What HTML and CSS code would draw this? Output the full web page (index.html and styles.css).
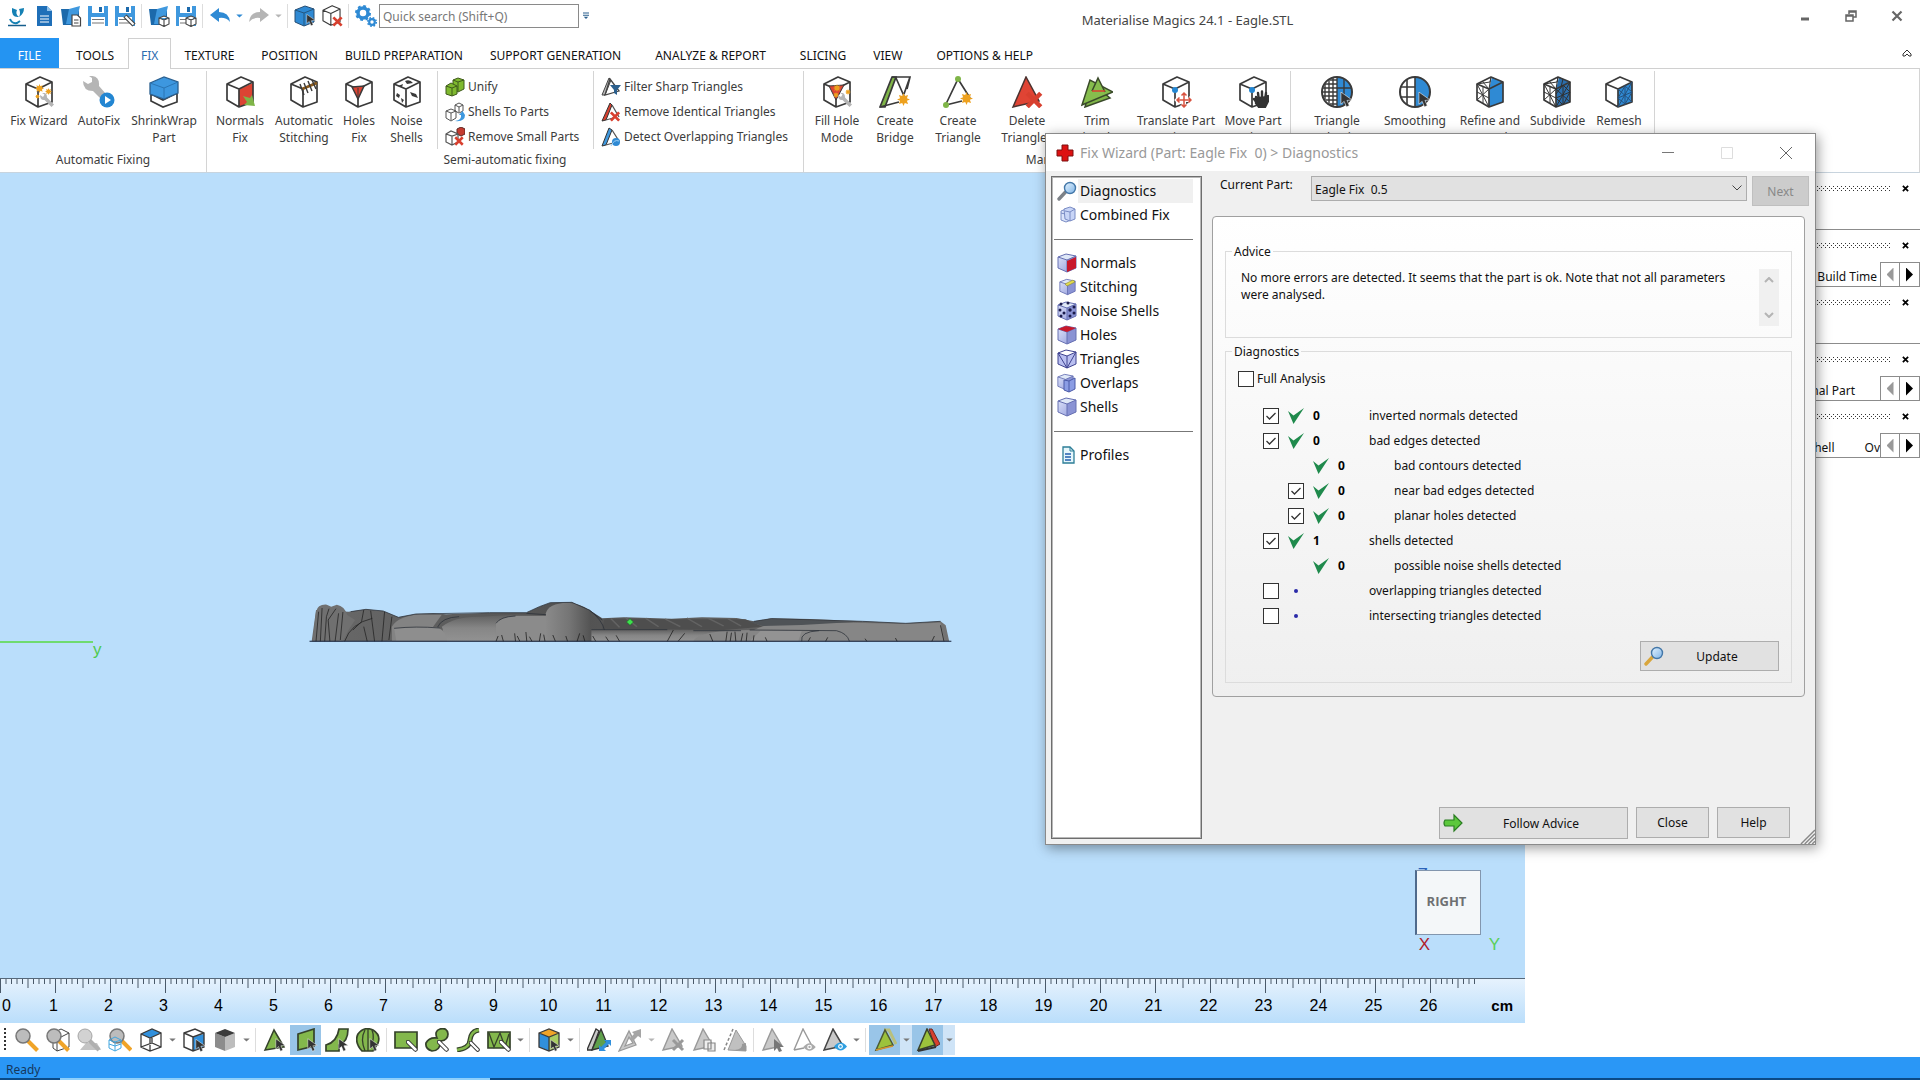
FILE: index.html
```html
<!DOCTYPE html>
<html lang="en">
<head>
  <meta charset="UTF-8">
  <title>Materialise Magics 24.1 - Eagle.STL</title>
  <link rel="stylesheet" href="styles.css">
</head>
<body>
  <!-- Icon sprite -->
  <svg class="sprite" xmlns="http://www.w3.org/2000/svg" aria-hidden="true">
    <defs>
      <linearGradient id="lensFill" x1="0" y1="0" x2="1" y2="1">
        <stop offset="0" stop-color="#e4f3ff"/><stop offset="1" stop-color="#7fb4e6"/>
      </linearGradient>
      <linearGradient id="faceFill" x1="0" y1="0" x2="1" y2="1">
        <stop offset="0" stop-color="#dfe5fa"/><stop offset="1" stop-color="#8f98da"/>
      </linearGradient>
      <linearGradient id="stone" x1="0" y1="0" x2="0" y2="1">
        <stop offset="0" stop-color="#5e5e5e"/><stop offset=".5" stop-color="#868686"/><stop offset="1" stop-color="#929292"/>
      </linearGradient>
      <linearGradient id="stoneDark" x1="0" y1="0" x2="1" y2="0">
        <stop offset="0" stop-color="#6a6a6a"/><stop offset=".4" stop-color="#515151"/><stop offset="1" stop-color="#747474"/>
      </linearGradient>
      <linearGradient id="dome" x1="0" y1="0" x2="1" y2="0">
        <stop offset="0" stop-color="#8a8a8a"/><stop offset=".5" stop-color="#757575"/><stop offset="1" stop-color="#505050"/>
      </linearGradient>
    </defs>

    <!-- shared parts -->
    <symbol id="cube" viewBox="0 0 32 32">
      <path d="M3 8 17 1 29 6V26L15 31 3 24ZM3 8 15 13 29 6M15 13V31" fill="none" stroke="#3a3a3a" stroke-width="1.7" stroke-linejoin="round"/>
    </symbol>
    <symbol id="arrow" viewBox="0 0 14 16">
      <path d="M1 0 1 13 4.500 10 7 16 10 14.500 7.500 9 13 8.500Z" fill="#333" stroke="#fff" stroke-width=".6"/>
    </symbol>
    <symbol id="cross" viewBox="0 0 12 12">
      <path d="M1.500 1.500 10.500 10.500M10.500 1.500 1.500 10.500" stroke="#d8402f" stroke-width="3"/>
    </symbol>
    <symbol id="spark" viewBox="0 0 16 16">
      <path d="M8 0 9.600 3.800 13.600 2.400 12.200 6.400 16 8 12.200 9.600 13.600 13.600 9.600 12.200 8 16 6.400 12.200 2.400 13.600 3.800 9.600 0 8 3.800 6.400 2.400 2.400 6.400 3.800Z" fill="#eda11f"/>
    </symbol>
    <symbol id="wrench" viewBox="0 0 14 14">
      <path d="M0 2 3 4 4.500 1.500 2 0Q7-1 7 4.500L14 11.500 11.500 14 4.500 7Q0 7.500 0 2Z" fill="#b5b5b5"/>
    </symbol>
    <symbol id="caret" viewBox="0 0 8 5"><path d="M0 .500H8L4 4.500Z" fill="currentColor"/></symbol>
    <symbol id="eye" viewBox="0 0 14 9">
      <path d="M0 4.500Q7-4 14 4.500 7 13 0 4.500Z" fill="currentColor"/><circle cx="7" cy="4.500" r="2.600" fill="#fff"/><circle cx="7" cy="4.500" r="1.300" fill="currentColor"/>
    </symbol>
    <symbol id="lens" viewBox="0 0 24 24">
      <path d="M13 13 22.500 22.500" stroke="#f0a428" stroke-width="4"/><circle cx="8" cy="8" r="7" fill="#bcbcbc" stroke="#777" stroke-width="1.500"/>
    </symbol>

    <!-- quick access -->
    <symbol id="logo" viewBox="0 0 22 22">
      <path d="M6 3 11 5Q9 9 13 12 5 13 6 3ZM13 4 18 3Q18 9 13 12 15 8 13 4Z" fill="#1581b4"/><path d="M4 14Q6 19 11 18L14 16" fill="none" stroke="#1581b4" stroke-width="2"/><path d="M2 20.500H20" stroke="#175f8d" stroke-width="1.500"/>
    </symbol>
    <symbol id="newfile" viewBox="0 0 22 22">
      <path d="M4 1H14L19 6V21H4Z" fill="#1f6fb8"/><path d="M14 1 19 6H14Z" fill="#8fc1ea"/><path d="M7 11H16M7 14H16M7 17H16" stroke="#fff" stroke-width="1.200"/>
    </symbol>
    <symbol id="folder" viewBox="0 0 22 22">
      <path d="M1 4H9L10 6H19V20H3Z" fill="#1c69ab"/><path d="M9 4 20 1 17 14 13 19H6Z" fill="#3f98de"/>
    </symbol>
    <symbol id="openfile" viewBox="0 0 22 22">
      <use href="#folder"/><path d="M12 10H17.500L20.500 13V21H12Z" fill="#fff" stroke="#444" stroke-width="1.200"/><path d="M14 15H18.500M14 18H18.500" stroke="#444"/>
    </symbol>
    <symbol id="openpart" viewBox="0 0 22 22">
      <use href="#folder"/><path d="M11 13 16 11 21 13V19L16 21.500 11 19ZM11 13 16 15 21 13M16 15V21" fill="#fff" stroke="#444" stroke-width="1.100"/>
    </symbol>
    <symbol id="save" viewBox="0 0 22 22">
      <path d="M1 1H21V21H1Z" fill="#3f98de"/><path d="M5 1H17V8H5ZM4 12H18V21H4Z" fill="#fff"/><path d="M12 2H15V7H12Z" fill="#1c69ab"/><path d="M5 14.500H17M5 18H17" stroke="#777" stroke-width="1.200"/>
    </symbol>
    <symbol id="saveas" viewBox="0 0 22 22">
      <use href="#save"/><path d="M11 11 20 20" stroke="#444" stroke-width="4.500"/><path d="M11.500 11.500 19.500 19.500" stroke="#fff" stroke-width="2.200"/>
    </symbol>
    <symbol id="savepart" viewBox="0 0 22 22">
      <use href="#save"/><path d="M11 13 16 11 21 13V19L16 21.500 11 19ZM11 13 16 15 21 13M16 15V21" fill="#fff" stroke="#444" stroke-width="1.100"/>
    </symbol>
    <symbol id="undo" viewBox="0 0 22 22"><path d="M1 10 10 3V7Q20 7 21 17 17 12 10 13V17Z" fill="currentColor"/></symbol>
    <symbol id="redo" viewBox="0 0 22 22"><path d="M21 10 12 3V7Q2 7 1 17 5 12 12 13V17Z" fill="currentColor"/></symbol>
    <symbol id="selcube" viewBox="0 0 22 22">
      <path d="M1 5 11 1 20 4V17L10 21 1 17Z" fill="#2f8ad4" stroke="#284e73"/><path d="M1 5 10 8 20 4M10 8V21" fill="none" stroke="#24567f"/><use href="#arrow" x="12" y="9" width="10" height="12"/>
    </symbol>
    <symbol id="delcube" viewBox="0 0 22 22">
      <use href="#cube" x="0" y="0" width="21" height="21"/><use href="#cross" x="11" y="11" width="11" height="11"/>
    </symbol>
    <symbol id="gears" viewBox="0 0 22 22">
      <circle cx="8" cy="8" r="5" fill="none" stroke="#2f8ad4" stroke-width="3.500"/><circle cx="8" cy="8" r="7" fill="none" stroke="#2f8ad4" stroke-width="2" stroke-dasharray="2.800 2.700"/>
      <circle cx="17" cy="17" r="2.800" fill="none" stroke="#2f8ad4" stroke-width="2.200"/><circle cx="17" cy="17" r="4.300" fill="none" stroke="#2f8ad4" stroke-width="1.500" stroke-dasharray="1.700 1.700"/>
    </symbol>

    <!-- ribbon, large -->
    <symbol id="fixwizard" viewBox="0 0 32 32">
      <use href="#cube"/><use href="#spark" x="12" y="8" width="9" height="9"/><use href="#spark" x="22" y="12" width="7" height="7"/><use href="#spark" x="12" y="18" width="5" height="5"/><use href="#wrench" x="17" y="17" width="14" height="14"/>
    </symbol>
    <symbol id="autofix" viewBox="0 0 32 32">
      <path d="M0 5 5 8 9 6 9 2 6 0Q17-1 16 10L23 18 18 23 10 15Q0 15 0 5Z" fill="#b5b5b5"/><circle cx="24" cy="24" r="7.500" fill="#2386d2"/><path d="M22 20 28 24 22 28Z" fill="#fff"/>
    </symbol>
    <symbol id="shrinkwrap" viewBox="0 0 32 32">
      <path d="M3 18 15 24 29 17V26L15 31 3 25Z" fill="#fff" stroke="#3a3a3a" stroke-width="1.700"/><path d="M2 7 16 1 30 6V17L16 23 2 18Z" fill="#3d97df" stroke="#2a5f8f" stroke-width="1.300"/><path d="M2 7 16 12 30 6M16 12V23" fill="none" stroke="#2a75b4"/>
    </symbol>
    <symbol id="normalsfix" viewBox="0 0 32 32">
      <path d="M15 13 29 7V26L15 31Z" fill="#dc4433"/><use href="#cube"/><path d="M19 20 26 22 28 19 31 30 20 29 23 26Z" fill="#7fb548"/>
    </symbol>
    <symbol id="stitch" viewBox="0 0 32 32">
      <use href="#cube"/><path d="M14 13 29 7" stroke="#8a5a1c" stroke-width="2.500"/><path d="M12 8 16 19M16 7 20 17M20 5 24 15M24 4 28 13" stroke="#3a3a3a" stroke-width="1.400"/>
    </symbol>
    <symbol id="holes" viewBox="0 0 32 32">
      <use href="#cube"/><path d="M9 11 21 10 15 23Z" fill="#dc4433" stroke="#3a3a3a" stroke-width="1.500"/><path d="M15 12V22" stroke="#3a3a3a"/>
    </symbol>
    <symbol id="noise" viewBox="0 0 32 32">
      <use href="#cube"/><path d="M14 5Q19 3 22 7L16 8ZM6 17 9 19 8 22 5 20ZM10 22 13 24 11 27ZM19 16 25 18 27 22 21 20ZM7 10 12 8 11 11Z" fill="#3a3a3a"/>
    </symbol>
    <symbol id="fillhole" viewBox="0 0 32 32">
      <use href="#cube"/><path d="M8 10 23 9 15 24Z" fill="#dc4433" stroke="#3a3a3a"/><use href="#spark" x="12" y="8" width="8" height="8"/><use href="#spark" x="12" y="16" width="6" height="6"/><use href="#spark" x="24" y="13" width="6" height="6"/><use href="#wrench" x="17" y="17" width="14" height="14"/>
    </symbol>
    <symbol id="bridge" viewBox="0 0 32 32">
      <path d="M1 31 13 1 17 1 6 31Z" fill="#7fb548" stroke="#3a3a3a" stroke-width="1.700"/><path d="M13 1H31L28 13M17 2 25 20M1 31 20 26M31 1 25 18" fill="none" stroke="#3a3a3a" stroke-width="1.700"/><use href="#spark" x="18" y="17" width="13" height="13"/>
    </symbol>
    <symbol id="mktri" viewBox="0 0 32 32">
      <path d="M4 28 16 3 28 22M4 29 20 25" fill="none" stroke="#3a3a3a" stroke-width="1.700"/><circle cx="16" cy="3" r="3" fill="#7fb548"/><circle cx="4" cy="29" r="3" fill="#7fb548"/><use href="#spark" x="18" y="16" width="13" height="13"/>
    </symbol>
    <symbol id="rmtri" viewBox="0 0 32 32">
      <path d="M2 31 15 1 28 25Z" fill="#e04434" stroke="#4b3330" stroke-width="1.500"/><use href="#cross" x="14" y="15" width="18" height="18"/>
    </symbol>
    <symbol id="trimtri" viewBox="0 0 32 32">
      <path d="M4 31 11 7 29 22Z" fill="#7fb548" stroke="#3a4a2a" stroke-width="1.500"/><path d="M1 29 9 4 32 16Z" fill="#86bd4d" stroke="#3a4a2a" stroke-width="1.500"/><path d="M11 15 17 2 24 16" fill="#86bd4d" stroke="#3a4a2a" stroke-width="1.500"/><path d="M11 15H24" stroke="#d8402f" stroke-width="1.500"/>
    </symbol>
    <symbol id="translate" viewBox="0 0 32 32">
      <use href="#cube"/><circle cx="15" cy="14" r="3" fill="#2386d2"/><path d="M24 17V31M17 24H31M21.500 19.500 24 17 26.500 19.500M21.500 28.500 24 31 26.500 28.500M19.500 21.500 17 24 19.500 26.500M28.500 21.500 31 24 28.500 26.500" fill="none" stroke="#fff" stroke-width="4"/><path d="M24 17V31M17 24H31M21.500 19.500 24 17 26.500 19.500M21.500 28.500 24 31 26.500 28.500M19.500 21.500 17 24 19.500 26.500M28.500 21.500 31 24 28.500 26.500" fill="none" stroke="#d8523f" stroke-width="1.500"/>
    </symbol>
    <symbol id="movepart" viewBox="0 0 32 32">
      <use href="#cube"/><circle cx="15" cy="14" r="3" fill="#2386d2"/><path d="M19 21V27L22 31H28L31 25V20M22 25 21 17M25 24V15.500M28 24 29 17M20 27 17 23" fill="#333" stroke="#333" stroke-width="2.400" stroke-linecap="round"/>
    </symbol>
    <symbol id="trireduce" viewBox="0 0 32 32">
      <path d="M16 1A15 15 0 0 1 16 31Z" fill="#2f8ad4"/><circle cx="16" cy="16" r="15" fill="none" stroke="#3a3a3a" stroke-width="2"/><path d="M16 1V31M8 3V29M12 1V31M4 8V24M2 12H30M1 16H16M2 20H16M4 8H16M5 24H16M9 4H16M9 28H16M23 3V29" stroke="#3a3a3a" stroke-width="1.400"/><use href="#arrow" x="19" y="16" width="13" height="15"/>
    </symbol>
    <symbol id="smooth" viewBox="0 0 32 32">
      <path d="M16 1A15 15 0 0 1 16 31Z" fill="#2f8ad4"/><circle cx="16" cy="16" r="15" fill="none" stroke="#3a3a3a" stroke-width="2"/><path d="M16 1V31M8 3V29M2 11H16M2 21H16" stroke="#3a3a3a" stroke-width="1.600"/><use href="#arrow" x="19" y="16" width="13" height="15"/>
    </symbol>
    <symbol id="refine" viewBox="0 0 32 32">
      <path d="M15 13 29 6V26L15 31ZM15 13 18 1 29 6Z" fill="#2f8ad4"/><use href="#cube"/><path d="M3 8 15 31M15 13 3 24M9 10V27M3 8 16 6 17 1 15 13M3 16 15 22M8 5 15 13" fill="none" stroke="#3a3a3a"/>
    </symbol>
    <symbol id="subdivide" viewBox="0 0 32 32">
      <path d="M15 13 29 6V26L15 31ZM15 13 18 1 29 6Z" fill="#2b6fae"/><use href="#cube"/><path d="M3 8 15 31M15 13 3 24M9 10V27M3 8 16 6 17 1 15 13M3 16 15 22M8 5 15 13M15 13 29 26M29 6 15 31M22 9V29M15 22 29 16M15 18 22 9 29 16 22 29 15 22M22 3 20 11" fill="none" stroke="#303030"/>
    </symbol>
    <symbol id="remesh" viewBox="0 0 32 32">
      <path d="M15 13 29 6V26L15 31Z" fill="#2f8ad4"/><use href="#cube"/><path d="M15 13 29 26M29 6 15 31M22 9V29M15 22 29 16M15 22 22 10 29 16 22 28Z" fill="none" stroke="#24507c"/>
    </symbol>

    <!-- ribbon, small -->
    <symbol id="unify" viewBox="0 0 20 20">
      <path d="M8 3 13 1 19 3V12L13 15 8 12Z" fill="#7fb92f" stroke="#3f5a1c"/><path d="M8 3 13 5 19 3M13 5V14" fill="none" stroke="#3f5a1c"/><path d="M1 9 6 6 12 9V17L7 19 1 17Z" fill="#7fb92f" stroke="#3f5a1c"/><path d="M1 9 7 11 12 9M7 11V19" fill="none" stroke="#3f5a1c"/>
    </symbol>
    <symbol id="toparts" viewBox="0 0 20 20">
      <path d="M10 3 14 1 18 3V9L14 11 10 9ZM10 3 14 5 18 3M14 5V10M1 9 6 7 11 9V16L6 19 1 16ZM1 9 6 11 11 9M6 11V18" fill="#fff" stroke="#555"/><path d="M10 19Q17 18 16 13H14L17.500 9 20 13Q20 20 10 19Z" fill="#3f98de"/>
    </symbol>
    <symbol id="rmsmall" viewBox="0 0 20 20">
      <path d="M12 2 16 0 20 2V7L16 9 12 7Z" fill="#c43c30" stroke="#5c2722"/><path d="M1 7 6 4 13 7V15L7 18 1 15ZM1 7 7 9 13 7M7 9V18" fill="#fff" stroke="#555" stroke-width="1.200"/><use href="#cross" x="9" y="9" width="10" height="10"/>
    </symbol>
    <symbol id="sharp" viewBox="0 0 20 20">
      <path d="M1 18 8 1 10 3 4 18Z" fill="#bbb" stroke="#444"/><path d="M4 18 9 2 18 14Z" fill="none" stroke="#444" stroke-width="1.300"/><path d="M9 8H20L16 13V18L13 16V13Z" fill="#2b5f8d"/>
    </symbol>
    <symbol id="identical" viewBox="0 0 20 20">
      <path d="M1 19 9 1 11 3 5 18Z" fill="#d8402f" stroke="#333"/><path d="M11 3 18 15M5 18 12 16" stroke="#555" stroke-width="1.300"/><use href="#cross" x="8" y="9" width="12" height="11"/>
    </symbol>
    <symbol id="overlap" viewBox="0 0 20 20">
      <path d="M1 19 8 1 11 3 5 18Z" fill="#3f98de" stroke="#333"/><path d="M11 3 18 14M5 18 12 16" stroke="#555" stroke-width="1.300"/><circle cx="15" cy="15" r="4" fill="#2f8ad4"/><path d="M10 19Q13 12 18 14" stroke="#9fd0f5" fill="none"/>
    </symbol>

    <!-- dialog -->
    <symbol id="redcross" viewBox="0 0 18 18"><path d="M6 1H12V6H17V12H12V17H6V12H1V6H6Z" fill="#d11" stroke="#7c1010"/></symbol>
    <symbol id="glass" viewBox="0 0 20 20"><path d="M8.500 11 2 18" stroke="currentColor" stroke-width="3.400" stroke-linecap="round"/><circle cx="13" cy="7" r="5.500" fill="url(#lensFill)" stroke="#4377a8" stroke-width="1.400"/></symbol>
    <symbol id="combined" viewBox="0 0 20 20"><path d="M4 6 9 4 14 5V15L9 17 4 15Z" fill="#dbe4fb" stroke="#7a8cc4"/><path d="M7 4 13 2 18 4V14L13 16 8 14Z" fill="#c8d5f7" stroke="#7a8cc4"/><path d="M8 6 13 7 18 4M13 7V16M4 8 8 9" fill="none" stroke="#7a8cc4"/></symbol>
    <symbol id="bluecube" viewBox="0 0 20 20"><path d="M1 4 9 1 19 3V15L10 19 1 15Z" fill="url(#faceFill)"/><path d="M1 4 9 1 19 3 10 7Z" fill="#dfe8f7"/><path d="M10 7 19 3V15L10 19Z" fill="#8a93d4"/><path d="M1 4 9 1 19 3V15L10 19 1 15ZM1 4 10 7 19 3M10 7V19" fill="none" stroke="#6770b2"/></symbol>
    <symbol id="d-normals" viewBox="0 0 20 20"><use href="#bluecube"/><path d="M10 8 19 4V15L10 19Z" fill="#c8182c"/></symbol>
    <symbol id="d-stitch" viewBox="0 0 20 20"><use href="#bluecube" x="2" y="1" width="17" height="18"/><path d="M8 7 16 3 18 5 10 9Z" fill="#e2dc4e" stroke="#8a8430" stroke-width=".6"/></symbol>
    <symbol id="d-noise" viewBox="0 0 20 20"><use href="#bluecube"/><g fill="#1b1c4c"><circle cx="4" cy="3" r="1.500"/><circle cx="11" cy="2" r="1.500"/><circle cx="17" cy="6" r="1.500"/><circle cx="13" cy="9" r="1.700"/><circle cx="3" cy="9" r="1.500"/><circle cx="7" cy="12" r="1.500"/><circle cx="13" cy="15" r="1.500"/><circle cx="17" cy="12" r="1.500"/><circle cx="4" cy="15" r="1.500"/></g></symbol>
    <symbol id="d-holes" viewBox="0 0 20 20"><use href="#bluecube"/><path d="M1 4 9 1 19 3 10 7Z" fill="#c8182c"/></symbol>
    <symbol id="d-tri" viewBox="0 0 20 20"><path d="M1 4 10 7 19 3V15L10 19 1 15Z" fill="#b9bff0"/><path d="M1 4 9 1 19 3V15L10 19 1 15ZM1 4 10 7 19 3M10 7V19M1 4 10 19 19 3" fill="none" stroke="#3f4390"/></symbol>
    <symbol id="d-overlap" viewBox="0 0 20 20"><use href="#bluecube" x="0" y="0" width="17" height="18"/><path d="M7 7 12 8 18 5V16L12 19 7 17Z" fill="#8b9de4" stroke="#4b5aa8"/><path d="M12 8V19" stroke="#4b5aa8"/></symbol>
    <symbol id="d-profile" viewBox="0 0 20 20"><path d="M6 2H13L17 6V18H6Z" fill="#e6f6fb" stroke="#2d7e97" stroke-width="1.300"/><path d="M13 2V6H17" fill="none" stroke="#2d7e97"/><path d="M8 9H14M8 12H14M8 15H14" stroke="#235fae" stroke-width="1.300"/></symbol>
    <symbol id="tick" viewBox="0 0 16 16"><path d="M0 3 5.500 7.500 16 0 5.500 16Z" fill="#1f8a4c"/></symbol>
    <symbol id="follow" viewBox="0 0 20 18"><path d="M2 6H11V1L19 9 11 17V12H2Q0 9 2 6Z" fill="#5cc83c" stroke="#2a7d22" stroke-width="1.200"/></symbol>

    <!-- bottom toolbar -->
    <symbol id="t-zoombox" viewBox="0 0 24 24"><path d="M7 5 15 1 23 5V19L11 23 7 20Z" fill="#fff" stroke="#444"/><path d="M11 11V23M11 11 23 5" stroke="#444"/><use href="#lens"/></symbol>
    <symbol id="t-zoomgray" viewBox="0 0 24 24"><path d="M3 22 9 15H20L24 22Z" fill="#c4c4c4"/><path d="M12 12 22 22" stroke="#b0b0b0" stroke-width="4"/><circle cx="8" cy="8" r="7" fill="#d2d2d2" stroke="#a5a5a5"/></symbol>
    <symbol id="t-zoomsel" viewBox="0 0 24 24"><path d="M14 13 23 22" stroke="#f0a428" stroke-width="4"/><circle cx="9" cy="8" r="7" fill="#bcbcbc" stroke="#777" stroke-width="1.500"/><path d="M1 12 7 9 13 12V20L7 23 1 20ZM1 12 7 14 13 12M7 14V23M1 16 7 18 13 16" fill="none" stroke="#42a6df"/></symbol>
    <symbol id="t-iso" viewBox="0 0 24 24"><path d="M2 6 13 1 22 5 11 10Z" fill="#3190dc"/><path d="M2 6 13 1 22 5V19L11 23 2 19ZM2 6 11 10 22 5M11 10V23M2 19 13 15 22 19M13 10V15" fill="none" stroke="#3a3a3a" stroke-width="1.300"/></symbol>
    <symbol id="t-face" viewBox="0 0 24 24"><path d="M11 9 22 6V19L11 23Z" fill="#3190dc"/><path d="M2 5 13 1 22 5V19L11 23 2 19ZM2 5 11 9 22 5M11 9V23" fill="none" stroke="#3a3a3a" stroke-width="1.400"/><use href="#arrow" x="13" y="11" width="11" height="13"/></symbol>
    <symbol id="t-shade" viewBox="0 0 24 24"><path d="M2 5 12 9V23L2 19Z" fill="#8c8c8c"/><path d="M12 9 22 5V19L12 23Z" fill="#bdbdbd"/><path d="M2 5 12 1 22 5 12 9Z" fill="#3b3b3b"/></symbol>
    <symbol id="t-tri" viewBox="0 0 24 24"><path d="M2 22 11 2 21 19Z" fill="#83b84c" stroke="#35422a" stroke-width="1.500"/><use href="#arrow" x="12" y="10" width="11" height="14"/></symbol>
    <symbol id="t-plane" viewBox="0 0 24 24"><path d="M4 6 20 1V18L4 22Z" fill="#83b84c" stroke="#35422a" stroke-width="1.700"/><use href="#arrow" x="13" y="10" width="11" height="14"/></symbol>
    <symbol id="t-curve" viewBox="0 0 24 24"><path d="M1 23V17Q12 14 14 1H23Q23 14 14 17V23Z" fill="#83b84c" stroke="#35422a" stroke-width="1.700"/><use href="#arrow" x="13" y="10" width="11" height="14"/></symbol>
    <symbol id="t-shell" viewBox="0 0 24 24"><path d="M6 23Q-2 14 2 6 8-2 17 2 25 7 22 15L17 23Z" fill="#83b84c" stroke="#35422a" stroke-width="1.700"/><path d="M9 23Q4 11 9 2M12 23V1M15 20Q19 9 16 2" fill="none" stroke="#35422a" stroke-width="1.300"/><use href="#arrow" x="13" y="10" width="11" height="14"/></symbol>
    <symbol id="pen" viewBox="0 0 12 12"><path d="M2 2 9.500 9.500" stroke="#333" stroke-width="4.500" stroke-linecap="round"/><path d="M2 2 9.500 9.500" stroke="#fff" stroke-width="2.500" stroke-linecap="round"/></symbol>
    <symbol id="t-rect" viewBox="0 0 24 24"><path d="M1 4H23V20H1Z" fill="#83b84c" stroke="#35422a" stroke-width="1.700"/><use href="#pen" x="12" y="12" width="12" height="12"/></symbol>
    <symbol id="t-blob" viewBox="0 0 24 24"><path d="M12 10Q9 3 15 1 22-1 23 6 23 12 16 13 15 23 7 23 0 21 1 15 4 9 12 10Z" fill="#83b84c" stroke="#35422a" stroke-width="1.700"/><use href="#pen" x="12" y="12" width="12" height="12"/></symbol>
    <symbol id="t-line" viewBox="0 0 24 24"><path d="M1 22Q14 20 14 12 15 3 23 2" fill="none" stroke="#35422a" stroke-width="5"/><path d="M1 22Q14 20 14 12 15 3 23 2" fill="none" stroke="#83b84c" stroke-width="2.500"/><use href="#pen" x="13" y="13" width="11" height="11"/></symbol>
    <symbol id="t-zig" viewBox="0 0 24 24"><path d="M1 4H23V20H1Z" fill="#83b84c" stroke="#35422a" stroke-width="1.700"/><path d="M2 5 7 19 13 5 18 19 22 6" fill="none" stroke="#35422a" stroke-width="1.300"/><use href="#pen" x="12" y="12" width="12" height="12"/></symbol>
    <symbol id="t-color" viewBox="0 0 24 24"><path d="M2 5 12 9V23L2 19Z" fill="#3190dc"/><path d="M12 9 22 5V19L12 23Z" fill="#a9cc62"/><path d="M2 5 12 1 22 5 12 9Z" fill="#f0a428"/><path d="M2 5 12 1 22 5V19L12 23 2 19ZM2 5 12 9 22 5M12 9V23" fill="none" stroke="#3a3a3a" stroke-width="1.300"/><use href="#arrow" x="13" y="11" width="10" height="13"/></symbol>
    <symbol id="t-invert" viewBox="0 0 24 24"><path d="M0 22 9 1 12 3 5 22Z" fill="#c9c9c9" stroke="#333" stroke-width="1.300"/><path d="M5 22 14 1 21 18Z" fill="#5fa04c" stroke="#333" stroke-width="1.300"/><path d="M12 23V17L14 19 19 14 17 12H24V18L22 16 17 21 19 23Z" fill="#3190dc"/></symbol>
    <symbol id="t-grow" viewBox="0 0 24 24"><path d="M1 23 11 3 18 17ZM7 18 15 15 11 9Z" fill="#c8c8c8" stroke="#9a9a9a" stroke-width="1.300" fill-rule="evenodd"/><path d="M11 11 16 6 14 4 23 1V10L20 8 15 13Z" fill="#a5a5a5"/></symbol>
    <symbol id="graytri" viewBox="0 0 24 24"><path d="M2 22 11 1 21 18Z" fill="#c9c9c9" stroke="#999" stroke-width="1.400"/></symbol>
    <symbol id="t-gdel" viewBox="0 0 24 24"><use href="#graytri"/><path d="M12 12 22 22M22 12 12 22" stroke="#999" stroke-width="3"/></symbol>
    <symbol id="t-gcopy" viewBox="0 0 24 24"><use href="#graytri"/><path d="M12 12H19V21H12ZM16 15H23V23H16Z" fill="#eee" stroke="#888" stroke-width="1.200"/></symbol>
    <symbol id="t-gsplit" viewBox="0 0 24 24"><path d="M5 22 13 2 23 18V23Z" fill="#c0c0c0" stroke="#999"/><path d="M1 22 10 1" stroke="#888" stroke-width="1.500" stroke-dasharray="3 2"/><path d="M12 22Q20 21 19 16L23 15V23Z" fill="#999"/></symbol>
    <symbol id="t-gsel" viewBox="0 0 24 24"><use href="#graytri"/><path d="M13 11V23L16 20 18 24 21 23 19 19H23Z" fill="#777"/></symbol>
    <symbol id="t-gview" viewBox="0 0 24 24"><path d="M2 22 11 1 20 18M2 22 12 20" fill="none" stroke="#999" stroke-width="1.400"/><use href="#eye" x="11" y="15" width="13" height="8" color="#aaa"/></symbol>
    <symbol id="t-view" viewBox="0 0 24 24"><path d="M1 22 10 1 20 18Z" fill="#c9c9c9" stroke="#444" stroke-width="1.500"/><use href="#eye" x="11" y="14" width="13" height="9" color="#2f9fe0"/></symbol>
    <symbol id="t-mark" viewBox="0 0 24 24"><path d="M11 2H16L23 16" fill="none" stroke="#b9c07c" stroke-width="3"/><path d="M3 22 12 2 20 17Z" fill="#9cc23c" stroke="#4d5a34" stroke-width="1.500"/><path d="M3 22 20 18" stroke="#d6942c" stroke-width="1.500"/></symbol>
    <symbol id="t-markred" viewBox="0 0 24 24"><path d="M13 1 16 1 24 16 19 19Z" fill="#d8402f" stroke="#6b2b25"/><path d="M2 22 11 1 19 17Z" fill="#9cc23c" stroke="#39422c" stroke-width="1.500"/><path d="M2 23 20 19" stroke="#333" stroke-width="2"/></symbol>
  </svg>

  <div class="app">
    <header class="titlebar">
      <div class="quick">
        <button class="qbtn" aria-label="Magics"><svg><use href="#logo"/></svg></button>
        <button class="qbtn" aria-label="New"><svg><use href="#newfile"/></svg></button>
        <button class="qbtn" aria-label="Open"><svg><use href="#openfile"/></svg></button>
        <button class="qbtn" aria-label="Save"><svg><use href="#save"/></svg></button>
        <button class="qbtn" aria-label="Save as"><svg><use href="#saveas"/></svg></button>
        <span class="sep"></span>
        <button class="qbtn" aria-label="Import part"><svg><use href="#openpart"/></svg></button>
        <button class="qbtn" aria-label="Save part"><svg><use href="#savepart"/></svg></button>
        <span class="sep"></span>
        <button class="qbtn undo" aria-label="Undo"><svg><use href="#undo"/></svg></button>
        <button class="caret undo" aria-label="Undo list"><svg><use href="#caret"/></svg></button>
        <button class="qbtn off" aria-label="Redo"><svg><use href="#redo"/></svg></button>
        <button class="caret off" aria-label="Redo list"><svg><use href="#caret"/></svg></button>
        <span class="sep"></span>
        <button class="qbtn" aria-label="Select part"><svg><use href="#selcube"/></svg></button>
        <button class="qbtn" aria-label="Unload part"><svg><use href="#delcube"/></svg></button>
        <span class="sep"></span>
        <button class="qbtn" aria-label="Settings"><svg><use href="#gears"/></svg></button>
        <input class="search" type="text" placeholder="Quick search (Shift+Q)" aria-label="Quick search">
        <button class="caret more" aria-label="Customize"><svg viewBox="0 0 8 10"><path d="M0 1H8M0 4H8" stroke="#2b5f8d" stroke-width="1.500"/><path d="M1 6H7L4 9Z" fill="#2b5f8d"/></svg></button>
      </div>
      <h1 class="title">Materialise Magics 24.1 - Eagle.STL</h1>
      <div class="winbtns">
        <button aria-label="Minimize"><svg viewBox="0 0 12 12"><path d="M2 9H10" stroke="#666" stroke-width="3"/></svg></button>
        <button aria-label="Restore"><svg viewBox="0 0 12 12"><path d="M4 4V1H11V7H8M1 5H8V11H1ZM1 6H8M4 2H11" fill="none" stroke="#666" stroke-width="1.500"/></svg></button>
        <button aria-label="Close"><svg viewBox="0 0 12 12"><path d="M1.500 1.500 10.500 10.500M10.500 1.500 1.500 10.500" stroke="#666" stroke-width="2.200"/></svg></button>
      </div>
    </header>

    <nav class="tabs">
      <a class="file" href="#">FILE</a>
      <a class="first" href="#">TOOLS</a>
      <a class="active" href="#">FIX</a>
      <a href="#">TEXTURE</a>
      <a href="#">POSITION</a>
      <a href="#">BUILD PREPARATION</a>
      <a href="#">SUPPORT GENERATION</a>
      <a class="wide" href="#">ANALYZE &amp; REPORT</a>
      <a class="wide" href="#">SLICING</a>
      <a href="#">VIEW</a>
      <a class="wide" href="#">OPTIONS &amp; HELP</a>
      <button class="collapse" aria-label="Collapse ribbon"><svg viewBox="0 0 10 8"><path d="M1 5 5 1 9 5V7H7L5 5 3 7H1Z" fill="none" stroke="#333"/></svg></button>
    </nav>

    <section class="ribbon">
      <div class="group">
        <div class="items cols-auto">
          <button class="big"><svg><use href="#fixwizard"/></svg>Fix Wizard</button>
          <button class="big"><svg><use href="#autofix"/></svg>AutoFix</button>
          <button class="big"><svg><use href="#shrinkwrap"/></svg>ShrinkWrap Part</button>
        </div>
        <h2>Automatic Fixing</h2>
      </div>
      <div class="group">
        <div class="row">
          <div class="items cols-semi">
            <button class="big"><svg><use href="#normalsfix"/></svg>Normals Fix</button>
            <button class="big"><svg><use href="#stitch"/></svg>Automatic Stitching</button>
            <button class="big"><svg><use href="#holes"/></svg>Holes Fix</button>
            <button class="big"><svg><use href="#noise"/></svg>Noise Shells</button>
          </div>
          <div class="smalls parts">
            <button><svg><use href="#unify"/></svg>Unify</button>
            <button><svg><use href="#toparts"/></svg>Shells To Parts</button>
            <button><svg><use href="#rmsmall"/></svg>Remove Small Parts</button>
          </div>
          <div class="smalls triangles">
            <button><svg><use href="#sharp"/></svg>Filter Sharp Triangles</button>
            <button><svg><use href="#identical"/></svg>Remove Identical Triangles</button>
            <button><svg><use href="#overlap"/></svg>Detect Overlapping Triangles</button>
          </div>
        </div>
        <h2>Semi-automatic fixing</h2>
      </div>
      <div class="group">
        <div class="items cols-manual">
          <button class="big"><svg><use href="#fillhole"/></svg>Fill Hole Mode</button>
          <button class="big"><svg><use href="#bridge"/></svg>Create Bridge</button>
          <button class="big"><svg><use href="#mktri"/></svg>Create Triangle</button>
          <button class="big"><svg><use href="#rmtri"/></svg>Delete Triangles</button>
          <button class="big"><svg><use href="#trimtri"/></svg>Trim<br>Triangles</button>
          <button class="big"><svg><use href="#translate"/></svg>Translate Part<br>Points</button>
          <button class="big"><svg><use href="#movepart"/></svg>Move Part<br>Points</button>
        </div>
        <h2>Manual</h2>
      </div>
      <div class="group">
        <div class="items cols-remesh">
          <button class="big"><svg><use href="#trireduce"/></svg>Triangle<br>Reduction</button>
          <button class="big"><svg><use href="#smooth"/></svg>Smoothing</button>
          <button class="big"><svg><use href="#refine"/></svg>Refine and<br>Smooth</button>
          <button class="big"><svg><use href="#subdivide"/></svg>Subdivide<br>Part</button>
          <button class="big"><svg><use href="#remesh"/></svg>Remesh</button>
        </div>
        <h2>Remeshing</h2>
      </div>
    </section>

    <main class="workspace">
      <div class="scene">
        <div class="viewport">
          <!-- Y axis -->
          <div class="axis"></div>
          <span class="axis-name">y</span>

          <!-- Relief, seen from the right -->
          <svg class="model" viewBox="0 0 1568 240" preserveAspectRatio="none">
            <path d="M135 95 175 88 215 93 250 112 290 102 330 100 360 103 460 98 545 98 575 80 600 68 650 67 690 90 720 115 770 112 830 114 880 116 950 112 1030 114 1070 124 1110 115 1200 117 1320 124 1420 130 1500 124 1512 136 1520 184H50L60 90Z" fill="url(#stoneDark)"/>
            <path d="M235 140Q250 108 300 103L350 104 330 140 345 184H235Z" fill="#838383"/>
            <path d="M350 140Q380 108 440 110L520 104 600 106V184H340Q360 165 350 140Z" fill="url(#stone)"/>
            <path d="M475 130Q485 110 520 108H600V184H475Z" fill="#8b8b8b"/>
            <path d="M590 184V100Q595 70 640 68 670 70 690 90L698 184Z" fill="url(#dome)"/>
            <path d="M240 145Q280 140 340 142 362 155 362 184H245Z" fill="#8e8e8e"/>
            <path d="M695 148 900 150 1060 150 1120 152V184H695Z" fill="url(#stone)"/>
            <path d="M725 118 1050 118 1090 140 1000 150 720 146Z" fill="#4e4e4e"/>
            <path d="M1070 150Q1110 122 1180 130L1300 128 1420 132 1500 128 1510 184H930Q940 150 1070 150Z" fill="#868686"/>
            <path d="M1060 126 1110 118 1310 125 1180 135 1090 138Z" fill="#4f5357"/>
            <path d="M52 184 60 95Q64 72 85 74L95 80 108 74Q126 78 132 105L150 120 135 150 122 184Z" fill="#707070"/>
            <path d="M1085 152 1180 153 1172 184H1060Z" fill="#939393"/>
            <path d="M60 184 66 95M70 184 74 84M80 184 84 110 90 86M92 184 88 120 106 86M104 184 112 100M116 180 122 96M126 184Q140 130 190 115M145 150 165 125 170 90M178 184 170 140M195 184 186 92M212 184 218 96M228 180 235 110" fill="none" stroke="#222" stroke-width="2"/>
            <path d="M140 95 175 88 215 93 250 112 290 102 460 98 545 98 575 80 600 68 650 67 690 90 720 120M340 142Q350 112 390 110M475 130Q485 110 520 108M545 100 590 104M240 145Q290 138 345 144M690 90Q720 120 725 150M695 149H870M930 152H1040M1060 150 1260 152Q1285 160 1290 184M1070 124 1110 116 1320 124 1420 130 1500 124M1180 184Q1175 155 1220 152" fill="none" stroke="#2b3138" stroke-width="2"/>
            <path d="M740 116 760 142M775 114 800 140M820 115 850 140M865 117 900 140M915 114 950 140M965 115 1000 138M1010 116 1040 138" stroke="#636363" stroke-width="4"/>
            <path d="M475 184 480 168M492 184 488 165M520 184 518 160M530 184 524 168M546 184 544 156M558 184 552 170M575 184 578 160M588 184 585 164M612 184 606 165M640 184 636 168M662 184 668 160M680 184 676 166M705 184 698 168M735 184 728 170M760 184 752 166M870 184 884 150M895 184 910 160M975 184 968 162M1005 184 1008 155M1015 184 1018 158M1028 184 1026 155M1040 184 1044 160M1052 184 1054 158M1068 184 1070 166M1100 184 1096 172M1195 184 1200 172M1235 184 1240 172M1330 184 1326 176M1400 184 1396 174M1480 184 1486 168M1508 184 1500 136" stroke="#1c1c1c" stroke-width="2"/>
            <path d="M45 184H1525" stroke="#15203a" stroke-width="3"/>
            <path d="M784 116 792 126 784 136 776 126Z" fill="#3ee04e" stroke="#17631e" stroke-width="1.500"/>
          </svg>

          <!-- View cube -->
          <span class="cube-z">Z</span>
          <button class="viewcube">RIGHT</button>
          <span class="cube-x">X</span>
          <span class="cube-y">Y</span>
        </div>
        <div class="ruler">
          <svg class="ticks">
            <defs>
              <pattern id="cm" width="55" height="14" patternUnits="userSpaceOnUse">
                <path d="M.5 0V14M28 0V9M6 0V5M11.500 0V5M17 0V5M22.500 0V5M33.500 0V5M39 0V5M44.500 0V5M50 0V5" stroke="#4a5a6a"/>
              </pattern>
            </defs>
            <rect width="1476" height="14" fill="url(#cm)"/>
          </svg>
          <div class="numbers">
            <span>0</span><span>1</span><span>2</span><span>3</span><span>4</span><span>5</span><span>6</span><span>7</span><span>8</span><span>9</span><span>10</span><span>11</span><span>12</span><span>13</span><span>14</span><span>15</span><span>16</span><span>17</span><span>18</span><span>19</span><span>20</span><span>21</span><span>22</span><span>23</span><span>24</span><span>25</span><span>26</span>
            <b>cm</b>
          </div>
        </div>
      </div>

      <aside class="docks">
        <section class="dock"><div class="grip"><i></i><button aria-label="Close"><svg viewBox="0 0 8 8"><path d="M1 1 7 7M7 1 1 7" stroke="#000" stroke-width="2"/></svg></button></div></section>
        <section class="dock">
          <div class="grip"><i></i><button aria-label="Close"><svg viewBox="0 0 8 8"><path d="M1 1 7 7M7 1 1 7" stroke="#000" stroke-width="2"/></svg></button></div>
          <div class="pages"><div class="names"><span>Build Time</span></div><button class="prev" aria-label="Previous"></button><button class="next" aria-label="Next"></button></div>
        </section>
        <section class="dock"><div class="grip"><i></i><button aria-label="Close"><svg viewBox="0 0 8 8"><path d="M1 1 7 7M7 1 1 7" stroke="#000" stroke-width="2"/></svg></button></div></section>
        <section class="dock">
          <div class="grip"><i></i><button aria-label="Close"><svg viewBox="0 0 8 8"><path d="M1 1 7 7M7 1 1 7" stroke="#000" stroke-width="2"/></svg></button></div>
          <div class="pages"><div class="names"><span class="roomy">Final Part</span></div><button class="prev" aria-label="Previous"></button><button class="next" aria-label="Next"></button></div>
        </section>
        <section class="dock">
          <div class="grip"><i></i><button aria-label="Close"><svg viewBox="0 0 8 8"><path d="M1 1 7 7M7 1 1 7" stroke="#000" stroke-width="2"/></svg></button></div>
          <div class="pages"><div class="names tight"><span class="shell">Shell</span><span>Ov</span></div><button class="prev" aria-label="Previous"></button><button class="next" aria-label="Next"></button></div>
        </section>
      </aside>
    </main>

    <div class="toolbar">
      <span class="handle"></span>
      <button class="tbtn" aria-label="Zoom"><svg><use href="#lens"/></svg></button>
      <button class="tbtn" aria-label="Zoom part"><svg><use href="#t-zoombox"/></svg></button>
      <button class="tbtn" aria-label="Zoom platform"><svg><use href="#t-zoomgray"/></svg></button>
      <button class="tbtn" aria-label="Zoom selection"><svg><use href="#t-zoomsel"/></svg></button>
      <button class="tbtn" aria-label="Default view"><svg><use href="#t-iso"/></svg></button>
      <button class="caret" aria-label="Views"><svg><use href="#caret"/></svg></button>
      <button class="tbtn" aria-label="Pick view"><svg><use href="#t-face"/></svg></button>
      <button class="tbtn" aria-label="Shading"><svg><use href="#t-shade"/></svg></button>
      <button class="caret" aria-label="Shading modes"><svg><use href="#caret"/></svg></button>
      <span class="sep"></span>
      <button class="tbtn" aria-label="Mark triangle"><svg><use href="#t-tri"/></svg></button>
      <button class="tbtn on" aria-label="Mark plane"><svg><use href="#t-plane"/></svg></button>
      <button class="tbtn" aria-label="Mark surface"><svg><use href="#t-curve"/></svg></button>
      <button class="tbtn" aria-label="Mark shell"><svg><use href="#t-shell"/></svg></button>
      <span class="sep"></span>
      <button class="tbtn" aria-label="Rectangle"><svg><use href="#t-rect"/></svg></button>
      <button class="tbtn" aria-label="Freeform"><svg><use href="#t-blob"/></svg></button>
      <button class="tbtn" aria-label="Polyline"><svg><use href="#t-line"/></svg></button>
      <button class="tbtn" aria-label="Window"><svg><use href="#t-zig"/></svg></button>
      <button class="caret" aria-label="Marking tools"><svg><use href="#caret"/></svg></button>
      <span class="sep"></span>
      <button class="tbtn" aria-label="Color"><svg><use href="#t-color"/></svg></button>
      <button class="caret" aria-label="Colors"><svg><use href="#caret"/></svg></button>
      <span class="sep"></span>
      <button class="tbtn" aria-label="Invert marking"><svg><use href="#t-invert"/></svg></button>
      <button class="tbtn" aria-label="Expand marking"><svg><use href="#t-grow"/></svg></button>
      <button class="caret off" aria-label="Expand modes"><svg><use href="#caret"/></svg></button>
      <button class="tbtn" aria-label="Delete marked"><svg><use href="#t-gdel"/></svg></button>
      <button class="tbtn" aria-label="Copy marked"><svg><use href="#t-gcopy"/></svg></button>
      <button class="tbtn" aria-label="Separate marked"><svg><use href="#t-gsplit"/></svg></button>
      <span class="sep"></span>
      <button class="tbtn" aria-label="Select marked"><svg><use href="#t-gsel"/></svg></button>
      <button class="tbtn" aria-label="Hide marked"><svg><use href="#t-gview"/></svg></button>
      <button class="tbtn" aria-label="Show marked"><svg><use href="#t-view"/></svg></button>
      <button class="caret" aria-label="Visibility"><svg><use href="#caret"/></svg></button>
      <span class="sep"></span>
      <button class="tbtn on" aria-label="Marked"><svg><use href="#t-mark"/></svg></button>
      <button class="caret on" aria-label="Marked options"><svg><use href="#caret"/></svg></button>
      <button class="tbtn on" aria-label="Bad edges"><svg><use href="#t-markred"/></svg></button>
      <button class="caret on" aria-label="Bad edge options"><svg><use href="#caret"/></svg></button>
    </div>

    <footer class="status">Ready</footer>
    <div class="taskbar"></div>

    <!-- Fix Wizard window -->
    <div class="dialog" role="dialog" aria-labelledby="dialogTitle">
      <div class="dialog-bar">
        <svg class="dialog-icon"><use href="#redcross"/></svg>
        <h2 id="dialogTitle">Fix Wizard (Part: Eagle Fix&nbsp; 0) &gt; Diagnostics</h2>
        <button aria-label="Minimize"><svg viewBox="0 0 14 14"><path d="M1 6.500H13" stroke="#777"/></svg></button>
        <button aria-label="Maximize" disabled><svg viewBox="0 0 14 14"><path d="M1.500 1.500H12.500V12.500H1.500Z" fill="none" stroke="#ddd"/></svg></button>
        <button aria-label="Close"><svg viewBox="0 0 14 14"><path d="M1 1 13 13M13 1 1 13" stroke="#666"/></svg></button>
      </div>
      <div class="dialog-body">
        <nav class="pages-list">
          <a class="current" href="#"><svg><use href="#glass"/></svg><span>Diagnostics</span></a>
          <a href="#"><svg><use href="#combined"/></svg><span>Combined Fix</span></a>
          <hr>
          <a href="#"><svg><use href="#d-normals"/></svg><span>Normals</span></a>
          <a href="#"><svg><use href="#d-stitch"/></svg><span>Stitching</span></a>
          <a href="#"><svg><use href="#d-noise"/></svg><span>Noise Shells</span></a>
          <a href="#"><svg><use href="#d-holes"/></svg><span>Holes</span></a>
          <a href="#"><svg><use href="#d-tri"/></svg><span>Triangles</span></a>
          <a href="#"><svg><use href="#d-overlap"/></svg><span>Overlaps</span></a>
          <a href="#"><svg><use href="#bluecube"/></svg><span>Shells</span></a>
          <hr>
          <a href="#"><svg><use href="#d-profile"/></svg><span>Profiles</span></a>
        </nav>

        <div class="page">
          <div class="part-row">
            <label for="part">Current Part:</label>
            <div class="combo">
              <select id="part"><option>Eagle Fix&nbsp; 0.5</option></select>
              <svg viewBox="0 0 10 6"><path d="M.5 .500 5 5 9.500 .500" fill="none" stroke="#444"/></svg>
            </div>
            <button class="btn next-part" disabled>Next</button>
          </div>

          <div class="panel">
            <fieldset>
              <legend>Advice</legend>
              <div class="advice">
                <p>No more errors are detected. It seems that the part is ok. Note that not all parameters were analysed.</p>
                <div class="scroll">
                  <svg viewBox="0 0 10 6"><path d="M1 5 5 1 9 5" fill="none" stroke="#b4b4b4" stroke-width="2"/></svg>
                  <svg viewBox="0 0 10 6"><path d="M1 1 5 5 9 1" fill="none" stroke="#b4b4b4" stroke-width="2"/></svg>
                </div>
              </div>
            </fieldset>

            <fieldset>
              <legend>Diagnostics</legend>
              <label class="full"><input type="checkbox">Full Analysis</label>
              <ul class="checks">
                <li><input id="c1" type="checkbox" checked><svg><use href="#tick"/></svg><b>0</b><label for="c1">inverted normals detected</label></li>
                <li><input id="c2" type="checkbox" checked><svg><use href="#tick"/></svg><b>0</b><label for="c2">bad edges detected</label></li>
                <li class="sub"><i></i><svg><use href="#tick"/></svg><b>0</b><span>bad contours detected</span></li>
                <li class="sub"><input id="c3" type="checkbox" checked><svg><use href="#tick"/></svg><b>0</b><label for="c3">near bad edges detected</label></li>
                <li class="sub"><input id="c4" type="checkbox" checked><svg><use href="#tick"/></svg><b>0</b><label for="c4">planar holes detected</label></li>
                <li><input id="c5" type="checkbox" checked><svg><use href="#tick"/></svg><b>1</b><label for="c5">shells detected</label></li>
                <li class="sub"><i></i><svg><use href="#tick"/></svg><b>0</b><span>possible noise shells detected</span></li>
                <li><input id="c6" type="checkbox"><i class="dot"></i><b></b><label for="c6">overlapping triangles detected</label></li>
                <li><input id="c7" type="checkbox"><i class="dot"></i><b></b><label for="c7">intersecting triangles detected</label></li>
              </ul>
              <button class="btn update"><svg><use href="#glass"/></svg><span>Update</span></button>
            </fieldset>
          </div>

          <div class="actions">
            <button class="btn follow"><svg><use href="#follow"/></svg><span>Follow Advice</span></button>
            <button class="btn">Close</button>
            <button class="btn">Help</button>
          </div>
        </div>
      </div>
      <svg class="resize" viewBox="0 0 16 16"><path d="M1 16 16 1M5 16 16 5M9 16 16 9M13 16 16 13" stroke="#888" stroke-width="1.500"/></svg>
    </div>
  </div>
</body>
</html>
```
FILE: styles.css
```css
* {
  box-sizing: border-box;
}
body {
  margin: 0;
  font-family: "Noto Sans", "Open Sans", sans-serif;
  font-size: 12px;
  line-height: 17px;
  color: #3c3c3c;
  background: #fff;
}
button {
  padding: 0;
  border: 0;
  background: none;
  font: inherit;
  color: inherit;
}
a {
  color: inherit;
  text-decoration: none;
}
h1, h2 {
  margin: 0;
  font-size: inherit;
  font-weight: normal;
}
svg {
  display: block;
}
.sprite {
  position: absolute;
  width: 0;
  height: 0;
}
.app {
  position: relative;
  display: flex;
  flex-direction: column;
  min-height: 100vh;
  overflow: hidden;
}

/* Title bar */
.titlebar {
  display: grid;
  grid-template-columns: auto 1fr auto;
  height: 38px;
}
.quick {
  display: flex;
  align-items: center;
  height: 32px;
  padding-left: 3px;
}
.qbtn {
  width: 27px;
}
.qbtn svg {
  width: 22px;
  height: 22px;
  margin: auto;
}
.caret {
  width: 12px;
  color: #777;
}
.caret svg {
  width: 7px;
  height: 4px;
  margin: auto;
}
.undo {
  color: #2f8ad4;
}
.off {
  color: #b5b5b5;
}
.sep {
  width: 1px;
  height: 24px;
  margin: 0 3px;
  background: #ddd;
}
.search {
  width: 200px;
  height: 24px;
  padding: 0 3px;
  border: 1px solid #8a8a8a;
  font: inherit;
}
.search::placeholder {
  color: #777;
}
.caret.more {
  width: 14px;
}
.more svg {
  width: 6px;
  height: 8px;
}
.title {
  align-self: center;
  padding-top: 3px;
  text-align: center;
  font-size: 13px;
  color: #444;
}
.winbtns {
  display: flex;
  justify-content: flex-end;
  align-items: center;
  height: 32px;
}
.winbtns button {
  width: 46px;
}
.winbtns svg {
  width: 12px;
  height: 12px;
  margin: auto;
}

/* Ribbon tabs */
.tabs {
  display: flex;
  height: 31px;
  border-bottom: 1px solid #d0d0d0;
  color: #111;
}
.tabs a {
  padding: 9px 14px 0 13px;
}
.tabs .file {
  width: 59px;
  padding: 9px 0 0;
  text-align: center;
  color: #fff;
  background: #2494f2;
}
.tabs .first {
  padding-left: 17px;
}
.tabs .active {
  margin-bottom: -1px;
  padding: 8px 12px 0;
  border: 1px solid #d0d0d0;
  border-bottom: 0;
  color: #2b6cb0;
  background: #fff;
}
.tabs .wide {
  padding-left: 20px;
}
.collapse {
  margin-left: auto;
  width: 26px;
}
.collapse svg {
  width: 10px;
  height: 8px;
  margin: auto;
}

/* Ribbon */
.ribbon {
  display: flex;
  height: 104px;
  padding-top: 2px;
  border-right: 1px solid #d4d4d4;
  border-bottom: 1px solid #c8d4de;
}
.group {
  display: flex;
  flex-direction: column;
  border-right: 1px solid #d4d4d4;
}
.group h2 {
  margin-top: auto;
  padding-bottom: 4px;
  text-align: center;
}
.row {
  display: flex;
}
.items {
  display: grid;
  align-items: start;
  padding: 5px 3px 0;
}
.cols-auto {
  grid-template-columns: 68px 52px 78px;
  padding-left: 5px;
}
.cols-semi {
  grid-template-columns: 58px 70px 40px 55px;
  padding-left: 4px;
}
.cols-manual {
  grid-template-columns: 60px 56px 70px 68px 72px 86px 68px;
}
.cols-remesh {
  grid-template-columns: 86px 70px 80px 54px 70px;
  padding-right: 0;
}
.big svg {
  width: 32px;
  height: 32px;
  margin: 0 auto 4px;
}
.smalls {
  display: flex;
  flex-direction: column;
  padding: 3px 0 0 7px;
  border-left: 1px solid #d4d4d4;
}
.smalls button {
  display: flex;
  align-items: center;
  gap: 3px;
  height: 25px;
  white-space: nowrap;
}
.smalls svg {
  width: 20px;
  height: 20px;
}
.parts {
  width: 156px;
}
.triangles {
  width: 210px;
}

/* Workspace */
.workspace {
  display: flex;
  flex: 1;
}
.scene {
  display: flex;
  flex: 1;
  flex-direction: column;
}
.viewport {
  position: relative;
  flex: 1;
  overflow: hidden;
  background: #badefb;
  font-family: "Liberation Sans", sans-serif;
  font-size: 17px;
}
.axis {
  position: absolute;
  top: 468px;
  left: 0;
  width: 93px;
  height: 2px;
  background: #6fdb6f;
}
.axis-name {
  position: absolute;
  top: 468px;
  left: 93px;
  color: #4fc94f;
}
.model {
  position: absolute;
  top: 407px;
  left: 290px;
  width: 680px;
  height: 80px;
}
.viewcube {
  position: absolute;
  right: 44px;
  bottom: 43px;
  width: 66px;
  height: 65px;
  padding: 0 4px 2px 0;
  border: 1px solid #8296ae;
  border-left: 2px solid #4f6a8c;
  background: #f4f7f9;
  font-family: "Open Sans", sans-serif;
  font-size: 13px;
  font-weight: bold;
  color: #6e7072;
}
.cube-z, .cube-x, .cube-y {
  position: absolute;
  bottom: 25px;
}
.cube-z {
  right: 97px;
  bottom: 95px;
  color: #2b62b8;
}
.cube-x {
  right: 95px;
  color: #b0202c;
}
.cube-y {
  right: 25px;
  color: #5bcf5b;
}
.ruler {
  height: 45px;
  border-top: 1px solid #56687a;
  background: linear-gradient(#e6f2fd, #badefb);
  font-family: "Liberation Sans", sans-serif;
  font-size: 16px;
  color: #000;
}
.ticks {
  width: 100%;
  height: 14px;
}
.numbers {
  display: flex;
  padding-top: 4px;
}
.numbers span {
  width: 55px;
  flex: none;
  text-align: center;
}
.numbers span:first-child {
  width: 26px;
  padding-left: 2px;
  text-align: left;
}
.numbers b {
  margin-left: auto;
  padding-right: 12px;
  font-size: 15px;
}

/* Docked panels */
.docks {
  width: 395px;
  color: #111;
}
.dock {
  display: flex;
  flex-direction: column;
  height: 57px;
  border-bottom: 1px solid #8c8c8c;
}
.grip {
  display: flex;
  align-items: center;
  height: 31px;
  padding-right: 11px;
}
.grip i {
  flex: 1;
  height: 5px;
  margin-right: 12px;
  background:
    linear-gradient(90deg, #333 1px, transparent 1px) 0 0 / 4px 1px repeat-x,
    linear-gradient(90deg, #333 1px, transparent 1px) 2px 2px / 4px 1px repeat-x,
    linear-gradient(90deg, #333 1px, transparent 1px) 0 4px / 4px 1px repeat-x;
}
.grip svg {
  width: 7px;
  height: 7px;
}
.pages {
  display: flex;
  height: 24px;
  margin-top: auto;
}
.names {
  display: flex;
  flex: 1;
  justify-content: flex-end;
  padding: 6px 3px 0 0;
}
.names.tight {
  padding-right: 0;
}
.roomy {
  padding-right: 22px;
}
.shell {
  padding-right: 30px;
}
.pages button {
  width: 20px;
  border: 1px solid #8c8c8c;
  border-bottom: 0;
}
.pages .next {
  border-left: 0;
}
.pages button::before {
  content: "";
  display: block;
  width: 7px;
  height: 14px;
  margin: auto;
  background: #000;
  clip-path: polygon(0 0, 100% 50%, 0 100%);
}
.pages .prev::before {
  background: #999;
  clip-path: polygon(100% 0, 0 50%, 100% 100%);
}

/* Bottom toolbar */
.toolbar {
  display: flex;
  align-items: center;
  height: 34px;
}
.handle {
  width: 2px;
  height: 24px;
  margin: 0 5px 0 4px;
  background: repeating-linear-gradient(#333 0 2px, transparent 2px 4px);
}
.tbtn {
  width: 31px;
  height: 30px;
}
.tbtn svg {
  width: 24px;
  height: 24px;
  margin: auto;
}
.tbtn.on {
  background: #99c5e8;
}
.toolbar .caret {
  height: 30px;
}
.caret.on {
  background: #cfe4f7;
}
.status {
  height: 21px;
  padding: 4px 6px 0;
  color: #17375c;
  background: #2a97f6;
}
.taskbar {
  height: 2px;
  background: linear-gradient(90deg, #0b4a86 60px, #8fd0fb 60px 490px, #0b4a86 490px);
}

/* Fix Wizard */
.dialog {
  position: absolute;
  top: 133px;
  right: 104px;
  width: 771px;
  border: 1px solid #8a8a8a;
  background: #f0f0f0;
  box-shadow: 2px 3px 12px rgba(0, 0, 0, 0.4);
  color: #111;
}
.dialog-bar {
  display: flex;
  align-items: center;
  height: 37px;
  padding-left: 10px;
  background: #fff;
}
.dialog-icon {
  width: 18px;
  height: 18px;
  margin-right: 6px;
}
.dialog-bar h2 {
  margin-right: auto;
  font-size: 14px;
  color: #999;
}
.dialog-bar button {
  width: 59px;
}
.dialog-bar button svg {
  width: 14px;
  height: 14px;
  margin: auto;
}
.dialog-body {
  display: flex;
  gap: 10px;
  padding: 5px 6px 5px 5px;
}
.pages-list {
  width: 151px;
  padding: 2px 8px 0 2px;
  border: 1px solid #6e6e6e;
  outline: 1px solid #b8b8b8;
  outline-offset: -2px;
  background: #fff;
  font-size: 14px;
}
.pages-list a {
  display: flex;
  align-items: center;
  height: 24px;
  padding-left: 3px;
}
.pages-list svg {
  width: 20px;
  height: 20px;
  margin-right: 1px;
  color: #7d8288;
}
.pages-list span {
  flex: 1;
  padding-left: 2px;
  line-height: 24px;
}
.current span {
  background: #f0f0f0;
}
.pages-list hr {
  height: 1px;
  margin: 12px 0 11px;
  border: 0;
  background: #777;
}
.page {
  display: flex;
  flex: 1;
  flex-direction: column;
  min-height: 663px;
}
.part-row {
  display: flex;
  height: 40px;
  align-items: flex-start;
}
.part-row > label {
  width: 99px;
  padding-left: 8px;
}
.combo {
  position: relative;
  flex: 1;
}
.combo select {
  display: block;
  width: 100%;
  height: 25px;
  padding: 1px 3px 0;
  border: 1px solid #adadad;
  border-radius: 0;
  background: #e1e1e1;
  font: inherit;
  color: inherit;
  appearance: none;
}
.combo svg {
  position: absolute;
  top: 9px;
  right: 5px;
  width: 10px;
  height: 6px;
}
.btn {
  display: flex;
  align-items: center;
  justify-content: center;
  width: 73px;
  height: 31px;
  border: 1px solid #adadad;
  background: #e1e1e1;
}
.next-part {
  width: 57px;
  height: 30px;
  margin-left: 5px;
  border-color: #bfbfbf;
  background: #ccc;
  color: #888;
}
.panel {
  margin-right: 4px;
  padding: 26px 12px 13px;
  border: 1px solid #a0a0a0;
  border-radius: 4px;
  background: linear-gradient(#fff, #efefef);
}
fieldset {
  min-width: 0;
  margin: 0;
  padding: 0 12px 11px 6px;
  border: 1px solid #dcdcdc;
}
fieldset + fieldset {
  margin-top: 5px;
}
legend {
  padding: 0 2px;
}
.advice {
  display: flex;
  justify-content: space-between;
  padding: 9px 0 0 9px;
}
.advice p {
  flex: 1;
  margin: 0;
  padding-right: 6px;
}
.scroll {
  display: flex;
  flex-direction: column;
  justify-content: space-between;
  width: 20px;
  height: 57px;
  padding: 8px 5px;
  background: #f0f0f0;
}
.scroll svg {
  width: 10px;
  height: 6px;
}
input[type="checkbox"] {
  width: 16px;
  height: 16px;
  margin: 0;
  border: 1px solid #333;
  background: #fff center / 12px no-repeat;
  appearance: none;
}
input[type="checkbox"]:checked {
  background-image: url('data:image/svg+xml,<svg xmlns="http://www.w3.org/2000/svg" viewBox="0 0 12 12"><path d="M1.500 6 4.500 9 10.500 3" fill="none" stroke="%23333" stroke-width="1.300"/></svg>');
}
.full {
  display: flex;
  align-items: center;
  gap: 3px;
  width: fit-content;
  height: 25px;
  margin: 6px 0 12px 6px;
}
.checks {
  margin: 0;
  padding: 0 0 0 31px;
  list-style: none;
}
.checks li {
  display: grid;
  grid-template-columns: 25px 25px 56px auto;
  justify-content: start;
  align-items: center;
  height: 25px;
}
.checks .sub {
  padding-left: 25px;
}
.checks svg {
  width: 16px;
  height: 16px;
}
.checks b {
  color: #000;
}
.dot {
  width: 4px;
  height: 4px;
  margin-left: 6px;
  border-radius: 50%;
  background: #2a2aa8;
}
.update, .follow {
  width: 139px;
  height: 30px;
  margin: 13px 0 0 auto;
  padding-left: 3px;
}
.btn svg {
  width: 20px;
  height: 20px;
}
.btn svg + span {
  flex: 1;
  padding-right: 8px;
}
.update svg {
  color: #d9a63c;
}
.actions {
  display: flex;
  justify-content: flex-end;
  gap: 8px;
  margin-top: auto;
  padding-right: 19px;
}
.follow {
  width: 189px;
  height: 32px;
  margin: 0;
}
.resize {
  position: absolute;
  right: 0;
  bottom: 0;
  width: 15px;
  height: 15px;
}
```
